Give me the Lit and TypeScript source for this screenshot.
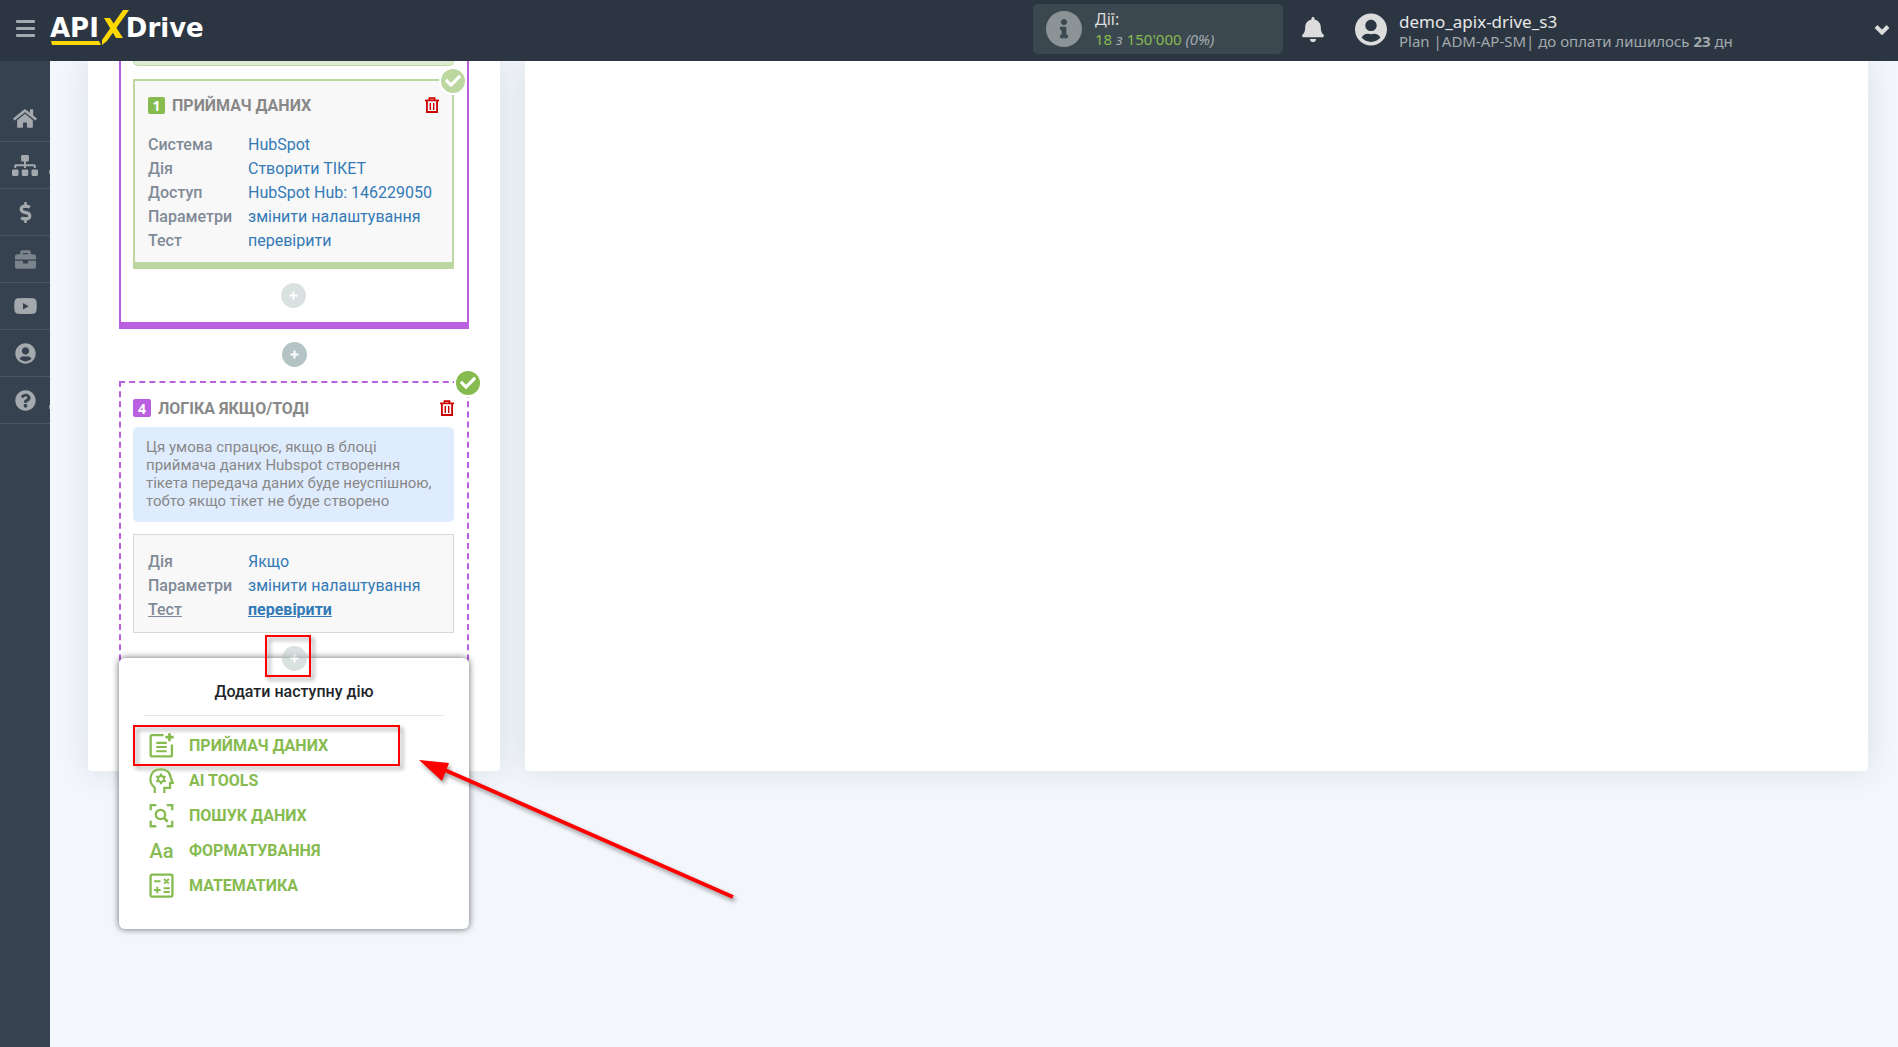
import { LitElement, html, css, svg, nothing } from "lit";
import { customElement, property } from "lit/decorators.js";
import { classMap } from "lit/directives/class-map.js";

interface Icon {
  box: string;
  body: unknown;
}

const solid = (box: string, d: string): Icon => ({ box, body: svg`<path d=${d}></path>` });

const ICONS: Record<string, Icon> = {
  bars: {
    box: "0 0 19 17",
    body: svg`<rect x="0" y="0" width="19" height="3" rx="1"></rect><rect x="0" y="7" width="19" height="3" rx="1"></rect><rect x="0" y="14" width="19" height="3" rx="1"></rect>`,
  },
  home: solid(
    "0 0 576 512",
    "M280.37 148.26L96 300.11V464a16 16 0 0 0 16 16l112.06-.29a16 16 0 0 0 15.92-16V368a16 16 0 0 1 16-16h64a16 16 0 0 1 16 16v95.64a16 16 0 0 0 16 16.05L464 480a16 16 0 0 0 16-16V300L295.67 148.26a12.19 12.19 0 0 0-15.3 0zM571.6 251.47L488 182.56V44.05a12 12 0 0 0-12-12h-56a12 12 0 0 0-12 12v72.61L318.47 43a48 48 0 0 0-61 0L4.34 251.47a12 12 0 0 0-1.6 16.9l25.5 31A12 12 0 0 0 45.15 301l235.22-193.74a12.19 12.19 0 0 1 15.3 0L530.9 301a12 12 0 0 0 16.9-1.6l25.5-31a12 12 0 0 0-1.7-16.93z"
  ),
  sitemap: solid(
    "0 0 640 512",
    "M128 352H32c-17.67 0-32 14.33-32 32v96c0 17.67 14.33 32 32 32h96c17.67 0 32-14.33 32-32v-96c0-17.67-14.33-32-32-32zm-24-80h192v48h48v-48h192v48h48v-57.59c0-21.17-17.23-38.41-38.41-38.41H344v-64h40c17.67 0 32-14.33 32-32V32c0-17.67-14.33-32-32-32H256c-17.67 0-32 14.33-32 32v96c0 17.67 14.33 32 32 32h40v64H94.41C73.23 224 56 241.23 56 262.41V320h48v-48zm264 80h-96c-17.67 0-32 14.33-32 32v96c0 17.67 14.33 32 32 32h96c17.67 0 32-14.33 32-32v-96c0-17.67-14.33-32-32-32zm240 0h-96c-17.67 0-32 14.33-32 32v96c0 17.67 14.33 32 32 32h96c17.67 0 32-14.33 32-32v-96c0-17.67-14.33-32-32-32z"
  ),
  dollar: solid(
    "0 0 288 512",
    "M209.2 233.4l-108-31.6C88.7 198.2 80 186.5 80 173.5c0-16.3 13.2-29.5 29.5-29.5h66.3c12.2 0 24.2 3.7 34.2 10.5 6.1 4.1 14.3 3.1 19.5-2l34.8-34c7.1-6.9 6.1-18.4-1.8-24.5C238 74.8 207.4 64.1 176 64V16c0-8.8-7.2-16-16-16h-32c-8.8 0-16 7.2-16 16v48h-2.5C45.8 64-5.4 118.7.5 183.6c4.2 46.1 39.4 83.6 83.8 96.6l102.5 30c12.5 3.7 21.2 15.3 21.2 28.3 0 16.3-13.2 29.5-29.5 29.5h-66.3C100 368 88 364.3 78 357.5c-6.1-4.1-14.3-3.1-19.5 2l-34.8 34c-7.1 6.9-6.1 18.4 1.8 24.5 24.5 19.2 55.1 29.9 86.5 30v48c0 8.8 7.2 16 16 16h32c8.8 0 16-7.2 16-16v-48.2c46.6-.9 90.3-28.6 105.7-72.7 21.5-61.6-14.6-124.8-72.5-141.7z"
  ),
  briefcase: solid(
    "0 0 512 512",
    "M320 336c0 8.84-7.16 16-16 16h-96c-8.84 0-16-7.16-16-16v-48H0v144c0 25.6 22.4 48 48 48h416c25.6 0 48-22.4 48-48V288H320v48zm144-208h-80V80c0-25.6-22.4-48-48-48H176c-25.6 0-48 22.4-48 48v48H48c-25.6 0-48 22.4-48 48v80h512v-80c0-25.6-22.4-48-48-48zm-144 0H192V96h128v32z"
  ),
  video: solid(
    "0 0 23 16",
    "M4 0.3Q11.5 -0.3 19 0.3Q22 0.5 22.5 3.5Q23 8 22.5 12.5Q22 15.5 19 15.7Q11.5 16.3 4 15.7Q1 15.5 0.5 12.5Q0 8 0.5 3.5Q1 0.5 4 0.3ZM9 5v6.4L14.7 8.2Z"
  ),
  user: solid(
    "0 0 496 512",
    "M248 8C111 8 0 119 0 256s111 248 248 248 248-111 248-248S385 8 248 8zm0 96c48.6 0 88 39.4 88 88s-39.4 88-88 88-88-39.4-88-88 39.4-88 88-88zm0 344c-58.7 0-111.3-26.6-146.5-68.2 18.8-35.4 55.6-59.8 98.5-59.8 2.4 0 4.8.4 7.1 1.1 13 4.2 26.6 6.9 40.9 6.9 14.3 0 28-2.7 40.9-6.9 2.3-.7 4.7-1.1 7.1-1.1 42.9 0 79.7 24.4 98.5 59.8C359.3 421.4 306.7 448 248 448z"
  ),
  question: solid(
    "0 0 512 512",
    "M504 256c0 136.997-111.043 248-248 248S8 392.997 8 256C8 119.083 119.043 8 256 8s248 111.083 248 248zM262.655 90c-54.497 0-89.255 22.957-116.549 63.758-3.536 5.286-2.353 12.415 2.715 16.258l34.699 26.31c5.205 3.947 12.621 3.008 16.665-2.122 17.864-22.658 30.113-35.797 57.303-35.797 20.429 0 45.698 13.148 45.698 32.958 0 14.976-12.363 22.667-32.534 33.976C247.128 238.528 216 254.941 216 296v4c0 6.627 5.373 12 12 12h56c6.627 0 12-5.373 12-12v-1.333c0-28.462 83.186-29.647 83.186-106.667 0-58.002-60.165-102-116.531-102zM256 338c-25.365 0-46 20.635-46 46 0 25.364 20.635 46 46 46s46-20.636 46-46c0-25.365-20.635-46-46-46z"
  ),
  info: solid(
    "8 8 496 496",
    "M256 8C119.043 8 8 119.083 8 256c0 136.997 111.043 248 248 248s248-111.003 248-248C504 119.083 392.957 8 256 8zm0 110c23.196 0 42 18.804 42 42s-18.804 42-42 42-42-18.804-42-42 18.804-42 42-42zm56 254c0 6.627-5.373 12-12 12h-88c-6.627 0-12-5.373-12-12v-24c0-6.627 5.373-12 12-12h12v-64h-12c-6.627 0-12-5.373-12-12v-24c0-6.627 5.373-12 12-12h64c6.627 0 12 5.373 12 12v100h12c6.627 0 12 5.373 12 12v24z"
  ),
  bell: solid(
    "0 0 448 512",
    "M224 512c35.32 0 63.97-28.65 63.97-64H160.03c0 35.35 28.65 64 63.97 64zm215.39-149.71c-19.32-20.76-55.47-51.99-55.47-154.29 0-77.7-54.48-139.9-127.94-155.16V32c0-17.67-14.32-32-31.98-32s-31.98 14.33-31.98 32v20.84C118.56 68.1 64.08 130.3 64.08 208c0 102.3-36.15 133.53-55.47 154.29-6 6.45-8.66 14.16-8.61 21.71.11 16.4 12.98 32 32.1 32h383.8c19.12 0 32-15.6 32.1-32 .05-7.55-2.61-15.27-8.61-21.71z"
  ),
  check: solid(
    "0 0 512 512",
    "M173.898 439.404l-166.4-166.4c-9.997-9.997-9.997-26.206 0-36.204l36.203-36.204c9.997-9.998 26.207-9.998 36.204 0L192 312.69 432.095 72.596c9.997-9.997 26.207-9.997 36.204 0l36.203 36.204c9.997 9.997 9.997 26.206 0 36.204l-294.4 294.401c-9.998 9.997-26.207 9.997-36.204-.001z"
  ),
  chevron: {
    box: "0 0 16 11",
    body: svg`<path d="M2 2.5 8 8.5 14 2.5" fill="none" stroke="currentColor" stroke-width="4"></path>`,
  },
  plus: {
    box: "0 0 9 9",
    body: svg`<path d="M4.5 0.5v8M0.5 4.5h8" fill="none" stroke="currentColor" stroke-width="2"></path>`,
  },
  trash: {
    box: "0 0 14 16",
    body: svg`<g fill="none" stroke="currentColor"><path d="M0 3.4H14" stroke-width="1.7"></path><path d="M4.5 3V1.2H9.5V3" stroke-width="1.8"></path><path d="M1.9 3.5V15H12.100V3.5" stroke-width="1.8"></path><path d="M5.300 6v7M8.700 6v7" stroke-width="1.400"></path></g>`,
  },
  receiver: {
    box: "0 0 24 24",
    body: svg`<g fill="none" stroke="currentColor" stroke-width="2.2"><path d="M14 2.100H3Q1.600 2.100 1.600 3.500V21Q1.600 22.400 3 22.400H20.500Q22 22.400 22 21V11"></path><path d="M19.700 0.200V7.800M15.700 4H23.700" stroke-width="2.600"></path><path d="M7 9.500H17M7 13.500H17M7 17.500H17" stroke-width="2"></path></g>`,
  },
  ai: {
    box: "0 0 24 24",
    body: svg`<g fill="none" stroke="currentColor" stroke-width="2.100"><path d="M5.500 24V18.800Q1.300 15.500 1.300 10.500Q1.800 1.400 11.500 1.200Q20 1.600 20.800 9L22.800 14.300H20.200V19H14.700V24"></path><circle cx="11.500" cy="10.500" r="2.800" stroke-width="1.800"></circle><path d="M11.500 5.300v2.200M11.500 13.500v2.200M7 7.900l1.900 1.100M14.100 12l1.900 1.100M7 13.100l1.900-1.100M14.100 9l1.900-1.100"></path></g>`,
  },
  search: {
    box: "0 0 24 24",
    body: svg`<g fill="none" stroke="currentColor" stroke-width="2.200"><path d="M1.600 7V2.100H7M17 2.100H22.300V7M22.300 17V22.300H17M7 22.300H1.600V17"></path><circle cx="11" cy="11" r="4.500"></circle><path d="M14 14 18 18" stroke-width="2.600"></path></g>`,
  },
  math: {
    box: "0 0 24 24",
    body: svg`<g fill="none" stroke="currentColor" stroke-width="2.200"><rect x="1.500" y="1.600" width="21" height="21" rx="1.500"></rect><path d="M5 8H11M14.500 5.700 19 10.200M19 5.700 14.500 10.200M4.800 16.300H11.200M8 13.100V19.500M14 14.700H20M14 18.200H20" stroke-width="1.900"></path></g>`,
  },
};

const icon = (name: string) => {
  const i = ICONS[name];
  return html`<svg class="icon icon-${name}" viewBox=${i.box} fill="currentColor" aria-hidden="true">${i.body}</svg>`;
};

const iconStyles = css`
  .icon {
    display: block;
    flex: none;
  }
`;

const resets = css`
  * {
    box-sizing: border-box;
  }
  button {
    margin: 0;
    padding: 0;
    border: 0;
    background: none;
    font: inherit;
    color: inherit;
    cursor: pointer;
  }
  a {
    text-decoration: none;
  }
`;

@customElement("top-bar")
class TopBar extends LitElement {
  static styles = [
    resets,
    iconStyles,
    css`
      :host {
        display: flex;
        align-items: flex-start;
        height: 61px;
        background: #2b3642;
        color: #dcdcdc;
        font-family: "Noto Sans", "Open Sans", sans-serif;
      }
      .burger {
        display: grid;
        place-items: center;
        width: 50px;
        height: 56px;
        color: #a3a9ad;
      }
      .icon-bars {
        width: 19px;
        height: 17px;
      }
      .logo {
        position: relative;
        display: flex;
        gap: 27px;
        height: 56px;
        color: #fff;
        font: 700 26px/56px "DejaVu Sans", sans-serif;
      }
      .logo-mark {
        position: absolute;
        left: 0;
        top: 0;
        width: 80px;
        height: 48px;
      }
      .right {
        display: flex;
        align-items: center;
        margin-left: auto;
        height: 58px;
      }
      .usage {
        display: flex;
        align-items: center;
        gap: 13px;
        width: 250px;
        height: 50px;
        padding: 0 13px;
        border-radius: 5px;
        background: #3c4850;
        font-size: 16px;
        line-height: 20px;
      }
      .icon-info {
        width: 36px;
        height: 36px;
        color: #8b9396;
      }
      .green {
        color: #86bb4f;
      }
      .muted {
        color: #a3a9ad;
        font-size: 15px;
      }
      .bell {
        margin: 0 31px 0 19px;
      }
      .icon-bell {
        width: 22px;
        height: 25px;
      }
      .account {
        display: flex;
        align-items: center;
        gap: 12px;
        width: 543px;
        padding-right: 8px;
      }
      .icon-user {
        width: 32px;
        height: 33px;
      }
      .who {
        flex: 1;
        padding-top: 3px;
        font-size: 17px;
        line-height: 20px;
        color: #e8e8e8;
      }
      .plan {
        line-height: 18px;
      }
      .icon-chevron {
        width: 16px;
        height: 11px;
      }
    `,
  ];

  render() {
    return html`
      <button class="burger" aria-label="Меню">${icon("bars")}</button>
      <a class="logo" href="#">
        <span>API</span><span>Drive</span>
        <svg class="logo-mark" viewBox="0 0 80 48" aria-hidden="true" fill="#ffd800">
          <path d="M1 41H49L51 45H2Z"></path>
          <path d="M73 10H79L57 41L52 45V40Z"></path>
          <path d="M54 18H60L73 38H66Z"></path>
        </svg>
      </a>
      <div class="right">
        <div class="usage">
          ${icon("info")}
          <div>
            <div>Дії:</div>
            <div class="muted"><span class="green">18</span> <i>з</i> <span class="green">150'000</span> <i>(0%)</i></div>
          </div>
        </div>
        <button class="bell" aria-label="Сповіщення">${icon("bell")}</button>
        <div class="account">
          ${icon("user")}
          <div class="who">
            <div>demo_apix-drive_s3</div>
            <div class="plan muted">Plan |ADM-AP-SM| до оплати лишилось <b>23</b> дн</div>
          </div>
          <button aria-label="Профіль">${icon("chevron")}</button>
        </div>
      </div>
    `;
  }
}

@customElement("side-nav")
class SideNav extends LitElement {
  static styles = [
    resets,
    iconStyles,
    css`
      :host {
        display: block;
        padding-top: 34px;
        background: #36424f;
      }
      .item {
        position: relative;
        display: grid;
        place-items: center;
        height: 47px;
        border-bottom: 1px solid #4b5764;
        color: #a3a9ad;
      }
      .dim {
        color: #7b848c;
      }
      .more::after {
        content: "";
        position: absolute;
        right: 0;
        bottom: 14px;
        width: 1px;
        height: 4px;
        background: #8b9399;
      }
      .icon {
        width: 21px;
        height: 21px;
      }
      .icon-home {
        width: 24px;
      }
      .icon-sitemap {
        width: 26px;
      }
      .icon-video {
        width: 23px;
        height: 16px;
      }
    `,
  ];

  private items = [
    { icon: "home", label: "Головна" },
    { icon: "sitemap", label: "Зв'язки", more: true },
    { icon: "dollar", label: "Оплата" },
    { icon: "briefcase", label: "Робота", dim: true },
    { icon: "video", label: "Відео" },
    { icon: "user", label: "Профіль" },
    { icon: "question", label: "Допомога", more: true },
  ];

  render() {
    return this.items.map(
      (i) => html`<a
        class=${classMap({ item: true, dim: !!i.dim, more: !!i.more })}
        href="#"
        aria-label=${i.label}
        >${icon(i.icon)}</a
      >`
    );
  }
}

interface Row {
  label: string;
  value: string;
  active?: boolean;
}

@customElement("param-list")
class ParamList extends LitElement {
  @property({ attribute: false }) rows: Row[] = [];

  static styles = [
    resets,
    css`
      :host {
        display: block;
        font-size: 16px;
        line-height: 24px;
      }
      .list {
        display: grid;
        grid-template-columns: 88px 1fr;
        column-gap: 12px;
        margin: 0;
        white-space: nowrap;
      }
      .label {
        color: #808a97;
        font-weight: 500;
      }
      .value {
        margin: 0;
      }
      .link {
        color: #337ab7;
      }
      .active {
        text-decoration: underline;
      }
      .link.active {
        font-weight: 700;
      }
    `,
  ];

  render() {
    return html`<dl class="list">
      ${this.rows.map(
        (r) => html`<dt class="label"><span class=${classMap({ active: !!r.active })}>${r.label}</span></dt>
          <dd class="value"><a class=${classMap({ link: true, active: !!r.active })} href="#">${r.value}</a></dd>`
      )}
    </dl>`;
  }
}

@customElement("next-menu")
class NextMenu extends LitElement {
  static styles = [
    resets,
    iconStyles,
    css`
      :host {
        display: block;
        padding: 28px 25px 26px;
        border-radius: 6px;
        background: #fff;
        box-shadow: 0 0 7px rgba(0, 0, 0, 0.6);
      }
      .title {
        margin: 0;
        padding-bottom: 17px;
        border-bottom: 1px solid #e8e8e8;
        color: #212529;
        font-size: 16px;
        font-weight: 500;
        line-height: 12px;
        text-align: center;
      }
      .items {
        margin: 12px 0 0;
        padding: 0;
        list-style: none;
      }
      .item {
        position: relative;
      }
      .entry {
        display: flex;
        align-items: center;
        gap: 15px;
        width: 100%;
        height: 35px;
        padding-left: 5px;
        color: #86bb4f;
        font-size: 16px;
        font-weight: 700;
      }
      .icon {
        width: 25px;
        height: 25px;
      }
      .letters {
        width: 25px;
        font-size: 20px;
        font-weight: 500;
        text-align: center;
      }
      .mark {
        position: absolute;
        left: -11px;
        top: -3px;
        width: 267px;
        height: 41px;
        border: 2px solid #f00;
        filter: drop-shadow(3px 3px 2px rgba(0, 0, 0, 0.4));
        pointer-events: none;
      }
      .arrow {
        position: absolute;
        z-index: 1;
        left: 270px;
        top: 26px;
        width: 330px;
        height: 150px;
        filter: drop-shadow(2px 3px 2px rgba(0, 0, 0, 0.4));
        pointer-events: none;
      }
    `,
  ];

  private entries = [
    { icon: "receiver", label: "ПРИЙМАЧ ДАНИХ", marked: true },
    { icon: "ai", label: "AI TOOLS" },
    { icon: "search", label: "ПОШУК ДАНИХ" },
    { icon: "", label: "ФОРМАТУВАННЯ" },
    { icon: "math", label: "МАТЕМАТИКА" },
  ];

  render() {
    return html`
      <h3 class="title">Додати наступну дію</h3>
      <ul class="items">
        ${this.entries.map(
          (e) => html`<li class="item">
            <button class="entry">
              ${e.icon ? icon(e.icon) : html`<span class="letters">Aa</span>`}<span>${e.label}</span>
            </button>
            ${e.marked
              ? html`<div class="mark"></div>
                  <svg class="arrow" viewBox="0 0 330 150" aria-hidden="true">
                    <path d="M24 13 319 143" stroke="#f00" stroke-width="4" fill="none"></path>
                    <path d="M5 6 35 9 28 27Z" fill="#f00"></path>
                  </svg>`
              : nothing}
          </li>`
        )}
      </ul>
    `;
  }
}

@customElement("app-root")
class AppRoot extends LitElement {
  static styles = [
    resets,
    iconStyles,
    css`
      :host {
        display: grid;
        grid-template: auto 1fr / 50px 1fr;
        min-height: 100vh;
        background: #f3f7fc;
        font-family: Roboto, sans-serif;
      }
      .top {
        grid-column: 1 / -1;
        z-index: 2;
      }
      .main {
        display: grid;
        grid-template-columns: 412px 1fr;
        gap: 25px;
        align-content: start;
        min-width: 0;
        padding: 0 30px 140px 38px;
        overflow: clip;
      }
      .panel {
        border-radius: 0 0 4px 4px;
        background: #fff;
        box-shadow: 0 0 30px rgba(40, 50, 70, 0.12);
      }
      .flow {
        z-index: 1;
        padding: 0 31px 60px;
      }
      .group {
        padding: 0 13px 14px 12px;
        border: 2px solid #b95fe0;
        border-top: 0;
        border-bottom-width: 7px;
      }
      .strip {
        height: 5px;
        border: 1px solid #badaa2;
        border-top: 0;
        border-radius: 0 0 5px 5px;
        background: #dcebd0;
      }
      .card {
        position: relative;
        margin-top: 13px;
        padding: 14px 13px 9px;
        border: 2px solid #bcd8a0;
        border-bottom-width: 7px;
        background: #f8f8f8;
      }
      .head {
        display: flex;
        align-items: center;
        gap: 7px;
        height: 20px;
        color: #888;
        font-size: 16px;
        font-weight: 700;
      }
      .number {
        display: grid;
        place-items: center;
        width: 17px;
        height: 17px;
        border-radius: 2px;
        background: #86bb4f;
        color: #fff;
        font: 700 14px/17px "Noto Sans", sans-serif;
      }
      .number.logic {
        width: 18px;
        height: 18px;
        background: #b95fe0;
      }
      .title {
        flex: 1;
        margin: 0;
        font: inherit;
      }
      .trash {
        color: #c00;
      }
      .icon-trash {
        width: 14px;
        height: 16px;
      }
      .card param-list {
        margin-top: 18px;
      }
      .done {
        position: absolute;
        right: -15px;
        top: -14px;
        display: grid;
        place-items: center;
        width: 28px;
        height: 28px;
        border: 2px solid #fff;
        border-radius: 50%;
        background: #86bb4f;
        color: #fff;
      }
      .done.pale {
        background: #bcd8a0;
      }
      .icon-check {
        width: 16px;
        height: 16px;
      }
      .add {
        display: grid;
        place-items: center;
        width: 25px;
        height: 25px;
        margin: 13px auto;
        border-radius: 50%;
        background: #b4c4c4;
        color: #fff;
      }
      .add.soft {
        margin: 14px auto 0;
        opacity: 0.5;
      }
      .icon-plus {
        width: 9px;
        height: 9px;
      }
      .logic-block {
        position: relative;
        height: 330px;
        margin-top: 14px;
        padding: 15px 13px 0 12px;
        border: 2px dashed #b95fe0;
      }
      .note {
        margin: 9px 0 12px;
        padding: 11px 13px 12px;
        border-radius: 5px;
        background: #dfecfe;
        color: #888;
        font-size: 15px;
        line-height: 18px;
      }
      .params {
        padding: 15px 14px 10px;
        border: 1px solid #d8d8d8;
        background: #f8f8f8;
      }
      .next {
        position: relative;
        margin: 13px -15px 0 -14px;
      }
      .next .add.soft {
        position: relative;
        z-index: 1;
        margin: 0 auto;
      }
      .popup {
        position: absolute;
        left: 0;
        right: 0;
        top: 12px;
      }
      .mark {
        position: absolute;
        z-index: 2;
        left: 146px;
        top: -11px;
        width: 46px;
        height: 42px;
        border: 2px solid #f00;
        filter: drop-shadow(3px 3px 2px rgba(0, 0, 0, 0.4));
        pointer-events: none;
      }
    `,
  ];

  private receiver: Row[] = [
    { label: "Система", value: "HubSpot" },
    { label: "Дія", value: "Створити ТІКЕТ" },
    { label: "Доступ", value: "HubSpot Hub: 146229050" },
    { label: "Параметри", value: "змінити налаштування" },
    { label: "Тест", value: "перевірити" },
  ];

  private logic: Row[] = [
    { label: "Дія", value: "Якщо" },
    { label: "Параметри", value: "змінити налаштування" },
    { label: "Тест", value: "перевірити", active: true },
  ];

  render() {
    return html`
      <top-bar class="top"></top-bar>
      <side-nav></side-nav>
      <main class="main">
        <section class="panel flow">
          <div class="group">
            <div class="strip"></div>
            <article class="card">
              <div class="done pale">${icon("check")}</div>
              <header class="head">
                <span class="number">1</span>
                <h2 class="title">ПРИЙМАЧ ДАНИХ</h2>
                <button class="trash" aria-label="Видалити">${icon("trash")}</button>
              </header>
              <param-list .rows=${this.receiver}></param-list>
            </article>
            <button class="add soft" aria-label="Додати дію">${icon("plus")}</button>
          </div>
          <button class="add" aria-label="Додати дію">${icon("plus")}</button>
          <article class="logic-block">
            <div class="done">${icon("check")}</div>
            <header class="head">
              <span class="number logic">4</span>
              <h2 class="title">ЛОГІКА ЯКЩО/ТОДІ</h2>
              <button class="trash" aria-label="Видалити">${icon("trash")}</button>
            </header>
            <div class="note">
              Ця умова спрацює, якщо в блоці приймача даних Hubspot створення тікета передача даних буде
              неуспішною, тобто якщо тікет не буде створено
            </div>
            <div class="params"><param-list .rows=${this.logic}></param-list></div>
            <div class="next">
              <button class="add soft" aria-label="Додати дію">${icon("plus")}</button>
              <next-menu class="popup"></next-menu>
              <div class="mark"></div>
            </div>
          </article>
        </section>
        <section class="panel"></section>
      </main>
    `;
  }
}
